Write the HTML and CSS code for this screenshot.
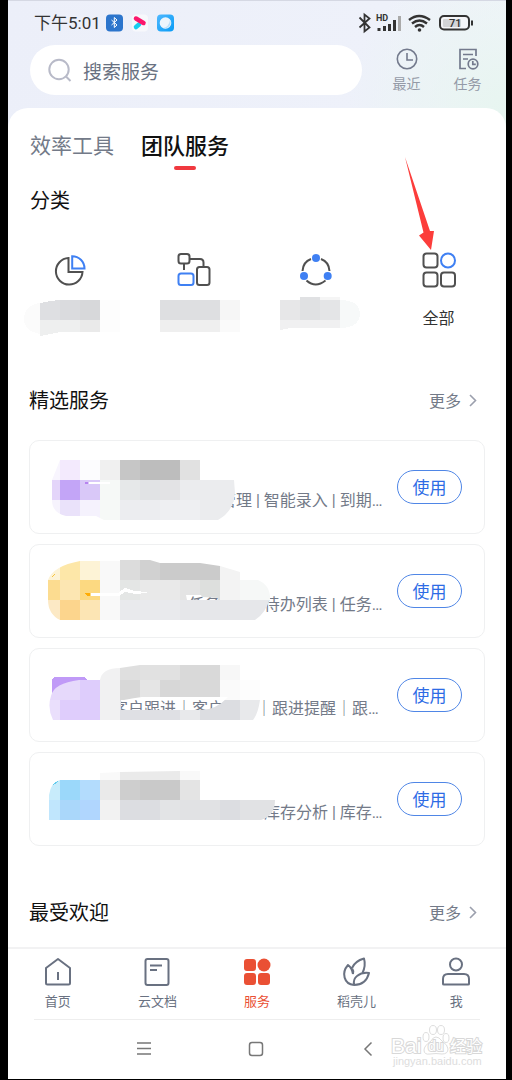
FILE: index.html
```html
<!DOCTYPE html>
<html lang="zh-CN">
<head>
<meta charset="utf-8">
<meta name="viewport" content="width=device-width">
<title>服务</title>
<link rel="stylesheet" href="styles.css">
</head>
<body>
<div class="phone">
  <header class="top">
    <div class="status">
      <span class="time">下午5:01</span>
      <svg class="apps" width="70" height="18" viewBox="0 0 70 18">
        <defs><linearGradient id="wx" x2="1" y2="1"><stop offset="0" stop-color="#4fb8ff"/><stop offset="1" stop-color="#079bf5"/></linearGradient></defs>
        <rect width="17" height="17" y=".5" rx="4" fill="#2c75cc"/>
        <path d="M5.500 6l5.500 5-2.700 2.500v-10L11 6l-5.500 5" fill="none" stroke="#fff"/>
        <rect x="26" width="16" height="17" y=".5" rx="4" fill="#f7f8fc"/>
        <path d="M30 13l3-2.500" stroke="#18cdef" stroke-width="4.500" stroke-linecap="round"/>
        <path d="M30 4.500l7.500 4.500" fill="none" stroke="#fb176c" stroke-width="4.500" stroke-linecap="round"/>
        <rect x="51" width="17" height="17" y=".5" rx="4" fill="url(#wx)"/>
        <circle cx="59.500" cy="9" r="5.800" fill="#edf5fc"/><path d="M64 6a5.800 5.800 0 0 1-7 8q6-1 7-8" fill="#b9def9"/>
      </svg>
      <svg class="signals" width="118" height="22" viewBox="356 13 118 22">
        <path d="M359.500 18.500l10 10-5 4v-17l5 4-10 9" fill="none" stroke="#333" stroke-width="1.800"/>
        <text x="376" y="22" class="hd">HD</text>
        <path d="M377.500 29v3h3v-3zM383 27v5h3v-5zM388 25v7h3v-7zM393 21v11h3v-11z" fill="#333"/><path d="M398 17v15h3v-15z" fill="#aaa"/>
        <g fill="none" stroke="#333" stroke-width="2.400"><path d="M409 21q10-8 21 0M412 24.500q7.500-6 15 0M415 28q4.500-4 9 0"/></g><circle cx="419.500" cy="31" r="1.800" fill="#333"/>
        <rect x="440" y="17" width="29" height="13.500" rx="4" fill="#f4f5f8" stroke="#333" stroke-width="2"/><rect x="443" y="20" width="18" height="8" rx="1" fill="#d4d5d8"/>
        <path d="M472 21.500v5" stroke="#333" stroke-width="2"/><text x="449" y="28" class="pct">71</text>
      </svg>
    </div>
    <div class="search-row">
      <label class="search">
        <svg width="26" height="26" viewBox="0 0 26 26" fill="none" stroke="#b8bac8" stroke-width="2"><circle cx="12" cy="12.500" r="9.700"/><path d="M19 19.500l4.500 4.500"/></svg>
        <input type="text" placeholder="搜索服务" aria-label="搜索服务">
      </label>
      <button class="tool">
        <svg width="24" height="24" viewBox="0 0 24 24" fill="none" stroke="#737a8d" stroke-width="1.600"><circle cx="12" cy="12" r="9.700"/><path d="M12 6v7h6"/></svg>
        <span>最近</span>
      </button>
      <button class="tool">
        <svg width="24" height="24" viewBox="0 0 24 24" fill="none" stroke="#737a8d" stroke-width="1.700"><path d="M20 9V2.500H4v19h6M7 7.500h10M7 12h5"/><circle cx="17" cy="17" r="4.800"/><path d="M16.800 14v3.400h3"/></svg>
        <span>任务</span>
      </button>
    </div>
  </header>
  <main class="sheet">
    <nav class="tabs">
      <button class="tab">效率工具</button>
      <button class="tab active">团队服务</button>
    </nav>
    <section class="categories">
      <h2>分类</h2>
      <div class="cats">
        <button class="cat" aria-label="分类">
          <svg width="36" height="36" viewBox="52 252 36 36" fill="none" stroke="#505050" stroke-width="2"><path d="M68.500 258a13.300 13.300 0 1 0 14 14h-14z"/><path d="M72.200 256.200v12.300h12.300a12.300 12.300 0 0 0-12.300-12.300z" stroke="#3f80f3"/></svg>
          <svg class="mask" width="96" height="38" viewBox="22 298 96 38" overflow="visible" shape-rendering="crispEdges">
            <path fill="#fbfbfb" d="M40 303q-16 2-16 16 0 12 16 15z"/><path fill="#dedfe2" d="M40 303l10-2 10-1v20H40z"/><path fill="#dadbde" d="M60 300h20v20H60z"/><path fill="#d7d8da" d="M80 300h20v20H80z"/><path fill="#eeefef" d="M40 320h40v12H60l-20 4z"/><path fill="#eaeaea" d="M80 320h20v12H80z"/><path fill="#fdfdfd" d="M100 300h20v32h-20z"/>
          </svg>
        </button>
        <button class="cat" aria-label="分类">
          <svg width="36" height="36" viewBox="175 252 36 36" fill="none" stroke="#505050" stroke-width="2"><rect x="178.500" y="254" width="11" height="9.500" rx="2.500"/><path d="M184 264v6M190 259h10q3.500 0 3.500 3.500v4.500"/><rect x="197" y="267" width="12.500" height="18" rx="2.500"/><rect x="178.500" y="273.500" width="15" height="11.500" rx="2.500" stroke="#3f80f3"/></svg>
          <svg class="mask" width="80" height="38" viewBox="153 298 80 38" overflow="visible" shape-rendering="crispEdges">
            <path fill="#dedfe1" d="M160 300h60v20h-60z"/><path fill="#f6f6f6" d="M220 300h20v20h-20z"/><path fill="#efefef" d="M160 320h60v12h-60z"/><path fill="#fafafa" d="M220 320h20v12h-20z"/>
          </svg>
        </button>
        <button class="cat" aria-label="分类">
          <svg width="36" height="36" viewBox="298 252 36 36" fill="none" stroke="#505050" stroke-width="2"><path d="M311 259q-8 3-8.500 12M321 259q8 3 8.500 12M306.500 280.500q9 8 19 0"/><g fill="#3f80f3" stroke="none"><circle cx="316" cy="258" r="4"/><circle cx="304" cy="276" r="4"/><circle cx="327.700" cy="276" r="4"/></g></svg>
          <svg class="mask" width="80" height="38" viewBox="276 298 80 38" overflow="visible" shape-rendering="crispEdges">
            <path fill="#e7e7e8" d="M280 300h20v20h-20z"/><path fill="#e0e1e3" d="M300 297h20v23h-20z"/><path fill="#e4e5e7" d="M320 300h20v20h-20z"/><path fill="#f5f5f5" d="M320 297h20v3h-20z"/><path fill="#f0f0f1" d="M280 320h60v8h-50l-10 2z"/><path fill="#f7f9f9" d="M340 300q20 0 20 15-2 13-20 13z"/>
          </svg>
        </button>
        <button class="cat">
          <svg width="36" height="36" viewBox="421 252 36 36" fill="none" stroke="#505050" stroke-width="2"><rect x="423.500" y="253.500" width="14" height="14" rx="3"/><circle cx="448" cy="260.500" r="7" stroke="#3f80f3"/><rect x="423.500" y="272.500" width="14" height="14" rx="3"/><rect x="441" y="272.500" width="14" height="14" rx="3"/></svg>
          <span>全部</span>
        </button>
      </div>
    </section>
    <svg class="arrow" width="30" height="93" viewBox="405 157 30 93"><path fill="#fc3d3b" d="M405 157l18.500 75.500-4.500 3 12 14.500 3-19h-4z"/></svg>
    <section class="featured">
      <div class="head"><h2>精选服务</h2><a class="more" href="#featured">更多<svg width="10" height="14" viewBox="0 0 10 14"><path d="M2 2l5.500 5.500-5.500 5.500" fill="none" stroke="#9b9fad" stroke-width="1.600"/></svg></a></div>
      <article class="card">
        <p class="desc short">管理 | 智能录入 | 到期…</p>
        <svg class="mosaic" width="455" height="93" viewBox="30 441 455 93" shape-rendering="crispEdges">
          <clipPath id="c1"><path d="M60 460H200v20h34l1 13q-1 18-17 27H104l-8-4H66q-14-3-14-16v-20z"/></clipPath>
          <g clip-path="url(#c1)">
            <path fill="#f8f5fe" d="M40 460h20v20H40z"/><path fill="#f3eafd" d="M60 460h20v20H60z"/><path fill="#fcfcfe" d="M80 460h20v20H80z"/><path fill="#f0f0f0" d="M100 460h20v20h-20z"/><path fill="#c6c6c6" d="M120 460h20v20h-20z"/><path fill="#bdbdbd" d="M140 460h40v20h-40z"/><path fill="#e1e1e1" d="M180 460h20v20h-20z"/>
            <path fill="#e4d5fa" d="M40 480h20v20H40z"/><path fill="#c3a5f7" d="M60 480h20v20H60z"/><path fill="#d9c8f8" d="M80 480h20v20H80z"/><path fill="#f6f9f7" d="M100 480h20v40h-20z"/><path fill="#e6e8e9" d="M120 480h20v20h-20z"/><path fill="#e1e3e5" d="M140 480h20v20h-20z"/><path fill="#e3e3e5" d="M160 480h20v20h-20z"/><path fill="#ebecee" d="M180 480h60v40h-60z"/>
            <path fill="#f6f3fd" d="M40 500h20v20H40z"/><path fill="#eae2fa" d="M60 500h20v20H60z"/><path fill="#f5f2fd" d="M80 500h20v20H80z"/><path fill="#ecedf0" d="M120 500h40v20h-40z"/><path fill="#eeeff2" d="M160 500h40v20h-40z"/>
          </g>
          <path fill="#fff" d="M89 482h21v2H89z"/><path fill="#b783ef" d="M85 482h3v2h-3z"/>
        </svg>
        <button class="use">使用</button>
      </article>
      <article class="card">
        <p class="desc mid">任务　　 | 待办列表 | 任务…</p>
        <svg class="mosaic" width="455" height="93" viewBox="30 545 455 93" shape-rendering="crispEdges">
          <clipPath id="c2"><path clip-rule="evenodd" d="M80 561h40v-1h30l10 3h40l20 3 20 6v8h18q12 5 12 18-4 15-15 22H60q-12-6-12-20v-20q5-14 32-19zM186 595h15l1 2 16 1v2h-31z"/></clipPath>
          <g clip-path="url(#c2)">
            <path fill="#fdf3d6" d="M40 560h20v20H40zM80 560h20v20H80z"/><path fill="#fde7a8" d="M60 560h20v20H60z"/><path fill="#f9f9f9" d="M100 560h20v60h-20z"/><path fill="#dcdcdc" d="M120 560h20v20h-20z"/><path fill="#d1d1d1" d="M140 560h20v20h-20z"/><path fill="#cbcbcb" d="M160 560h60v20h-60z"/><path fill="#f3f3f3" d="M220 560h20v40h-20z"/>
            <path fill="#fcdc90" d="M40 580h20v20H40z"/><path fill="#fce6b2" d="M60 580h20v20H60z"/><path fill="#fcd981" d="M80 580h20v20H80z"/><path fill="#e4e6e5" d="M120 580h20v20h-20z"/><path fill="#e9e9e9" d="M140 580h40v20h-40z"/><path fill="#e4e4e4" d="M180 580h20v20h-20z"/><path fill="#dddfdd" d="M200 580h20v20h-20z"/><path fill="#f6f8f7" d="M240 580h30v20h-30z"/>
            <path fill="#fce9c5" d="M40 600h20v20H40z"/><path fill="#fcd58d" d="M60 600h20v20H60z"/><path fill="#fce5b4" d="M80 600h20v20H80z"/><path fill="#e9eaed" d="M120 600h60v20h-60z"/><path fill="#e6e7ea" d="M180 600h90v20h-90z"/>
          </g>
          <path fill="#fff" d="M91 593h27l7-5 10 3 12 1v1l-12 1-10-2-6 4H91z"/><path fill="#ffad05" d="M84 593h6v3h-3z"/><path d="M52 577l3-3" stroke="#f7c440"/>
        </svg>
        <button class="use">使用</button>
      </article>
      <article class="card">
        <p class="desc">客户跟进｜客户　　｜跟进提醒｜跟…</p>
        <svg class="mosaic" width="455" height="93" viewBox="30 649 455 93" shape-rendering="crispEdges">
          <path fill="#c09af7" d="M52 694v-13q0-4 4-4h28l4 3v6z"/>
          <clipPath id="c3"><path d="M100 680q2-12 20-12l20-3h100v15h20v20q-2 14-7 20H53q-6-12-2-24 3-13 28-16h21zM121 700v10h80q15 0 27-13H142q-8 1-18 3z" clip-rule="evenodd"/></clipPath>
          <g clip-path="url(#c3)">
            <path fill="#e6d9fb" d="M40 680h40v20H40z"/><path fill="#decdfc" d="M80 680h20v40H80z"/><path fill="#f1f1f2" d="M100 660h20v60h-20z"/><path fill="#dfdfdf" d="M120 660h20v20h-20z"/><path fill="#e1e1e1" d="M140 660h40v20h-40z"/><path fill="#d9d9d9" d="M180 660h40v40h-40z"/><path fill="#f7f7f7" d="M220 660h20v20h-20z"/><path fill="#fafafa" d="M220 680h20v20h-20z"/><path fill="#fdfdfd" d="M240 680h20v20h-20z"/>
            <path fill="#d8d8d8" d="M120 680h20v20h-20z"/><path fill="#e5e5e5" d="M140 680h20v20h-20z"/><path fill="#d7d7d7" d="M160 680h20v20h-20z"/><path fill="#eadffc" d="M40 700h20v20H40z"/><path fill="#dfcdfc" d="M60 700h20v20H60z"/><path fill="#dfe0e4" d="M120 700h60v20h-60z"/><path fill="#e8e9eb" d="M180 700h20v20h-20zM240 700h20v20h-20z"/><path fill="#dcdde1" d="M200 700h40v20h-40z"/>
          </g>
        </svg>
        <button class="use">使用</button>
      </article>
      <article class="card">
        <p class="desc last">库存分析 | 库存…</p>
        <svg class="mosaic" width="455" height="93" viewBox="30 753 455 93" shape-rendering="crispEdges">
          <clipPath id="c4"><path d="M60 780h40v-7l20-1 60-1h20v29h75q0 16-14 20H49v-25q2-13 11-15z"/></clipPath>
          <g clip-path="url(#c4)">
            <path fill="#c8ecfb" d="M40 780h20v20H40z"/><path fill="#9bd8fa" d="M60 780h20v20H60z"/><path fill="#b3dcfd" d="M80 780h20v20H80z"/><path fill="#f9f9f9" d="M100 760h20v20h-20zM180 760h20v20h-20z"/><path fill="#eaeaea" d="M120 760h60v20h-60zM100 780h20v20h-20z"/><path fill="#cecece" d="M120 780h20v20h-20z"/><path fill="#c9c9c9" d="M140 780h40v20h-40z"/><path fill="#e4e4e4" d="M180 780h20v20h-20z"/>
            <path fill="#c0e6fd" d="M40 800h20v20H40z"/><path fill="#aad7fa" d="M60 800h20v20H60z"/><path fill="#b0d6fe" d="M80 800h20v20H80z"/><path fill="#f2f2f2" d="M100 800h20v20h-20z"/><path fill="#dcdde1" d="M120 800h40v20h-40zM220 800h20v20h-20z"/><path fill="#e3e4e6" d="M160 800h20v20h-20z"/><path fill="#e1e2e4" d="M180 800h40v20h-40zM240 800h40v20h-40z"/>
          </g>
          <path d="M53 785l5-4" stroke="#65cced"/>
        </svg>
        <button class="use">使用</button>
      </article>
    </section>
    <section class="popular">
      <div class="head"><h2>最受欢迎</h2><a class="more" href="#popular">更多<svg width="10" height="14" viewBox="0 0 10 14"><path d="M2 2l5.500 5.500-5.500 5.500" fill="none" stroke="#9b9fad" stroke-width="1.600"/></svg></a></div>
    </section>
  </main>
  <nav class="bottom">
    <a href="#home"><svg width="32" height="32" viewBox="0 0 32 32" fill="none" stroke="#697181" stroke-width="2"><path d="M16 3L4 12v15q0 1.500 1.500 1.500h21q1.500 0 1.500-1.500V12zM16 16v8" stroke-linejoin="round"/></svg>首页</a>
    <a href="#docs"><svg width="32" height="32" viewBox="0 0 32 32" fill="none" stroke="#697181" stroke-width="2"><rect x="4.500" y="3" width="23" height="26" rx="2"/><path d="M9 9.500h12M9 14h7"/></svg>云文档</a>
    <a class="on" href="#services"><svg width="32" height="32" viewBox="0 0 32 32" fill="#ea5034"><rect x="3" y="3" width="12" height="12" rx="3"/><circle cx="23" cy="9" r="6.500"/><rect x="3" y="17" width="12" height="12" rx="3"/><rect x="17" y="17" width="12" height="12" rx="3"/></svg>服务</a>
    <a href="#templates"><svg width="32" height="32" viewBox="0 0 32 32" fill="none" stroke="#697181" stroke-width="2" stroke-linejoin="round"><path d="M11 12q3-7 12-9.500 2 7-1.500 14.500M13 29C3 28 0 17 7 9q4 3 5 9M13 29q-1-6 3-9 5-4 12-3-3 12-15 12M12 18q1-3-1-6"/></svg>稻壳儿</a>
    <a href="#me"><svg width="32" height="32" viewBox="0 0 32 32" fill="none" stroke="#697181" stroke-width="2"><circle cx="16" cy="8.500" r="6"/><path d="M3 28v-5q0-5 5-5h16q5 0 5 5v5q0 .5-1 .5H4q-1 0-1-.5z"/></svg>我</a>
  </nav>
  <div class="system">
    <button aria-label="菜单"><svg width="16" height="16" viewBox="0 0 16 16"><path d="M1 2h14M1 7.500h14M1 13h14" stroke="#777" stroke-width="1.500"/></svg></button>
    <button aria-label="主页"><svg width="16" height="16" viewBox="0 0 16 16"><rect x="1.500" y="1.500" width="13" height="13" rx="2.500" fill="none" stroke="#777" stroke-width="1.500"/></svg></button>
    <button aria-label="返回"><svg width="16" height="16" viewBox="0 0 16 16"><path d="M11.500 1.500L5 8l6.500 6.500" fill="none" stroke="#777" stroke-width="1.500"/></svg></button>
    <svg class="mark" width="94" height="46" viewBox="390 1023 94 46">
      <g fill="#fff" stroke="#dedede"><ellipse cx="426" cy="1037" rx="3" ry="4.500"/><ellipse cx="433" cy="1030" rx="3.500" ry="4.500"/><ellipse cx="441" cy="1030" rx="3.500" ry="4.500"/><ellipse cx="446" cy="1038" rx="3" ry="4.500"/><path d="M436 1037q-3 0-5 4-7 5-7 9 0 5 6 4 6-1 12 0 6 0 6-5 0-4-6-8-3-4-6-4z"/></g>
      <text class="logo" x="391" y="1053">Bai</text><text class="logo du" x="428" y="1051">du</text><text class="logo cn" x="450" y="1052">经验</text><text class="url" x="393" y="1065">jingyan.baidu.com</text>
    </svg>
  </div>
</div>
</body>
</html>
```
FILE: styles.css
```css
* { box-sizing: border-box; }
body {
  margin: 0;
  background: #000;
  font-family: "Noto Sans CJK SC", sans-serif;
  color: #111;
}
button { border: 0; padding: 0; background: none; font: inherit; color: inherit; }
a { text-decoration: none; color: inherit; }
svg { display: block; flex: none; }
h2 { margin: 0; font-size: 20px; font-weight: 400; line-height: 28px; }
.phone {
  display: flex;
  flex-direction: column;
  min-height: calc(100vh - 1px);
  margin: 0 6px 1px 8px;
  background:
    radial-gradient(circle at 100% 110px, #e7f5f0, transparent 160px),
    linear-gradient(100deg, #eceff9 0, #eef1fa 55%, #f6f8fb 100%);
}
.top { height: 108px; border-top: 1px solid #d5d8e3; }
.status { display: flex; align-items: center; height: 44px; padding: 0 32px 0 26px; }
.time { font-family: Roboto, "Noto Sans CJK SC", sans-serif; font-size: 17px; line-height: 24px; color: #333; }
.apps { margin-left: 5px; }
.signals { margin-left: auto; }
.hd { font: 700 9px Roboto, sans-serif; fill: #333; }
.pct { font: 500 11px Roboto, sans-serif; fill: #333; }
.search-row { display: flex; align-items: center; padding: 0 8px 0 22px; }
.search {
  display: flex;
  flex: 1;
  align-items: center;
  gap: 10px;
  min-width: 0;
  height: 50px;
  margin-right: 14px;
  padding: 0 17px;
  border-radius: 25px;
  background: #fff;
}
.search input { flex: 1; min-width: 0; border: 0; padding: 0; outline: 0; background: none; font: 19px "Noto Sans CJK SC", sans-serif; }
.search input::placeholder { color: #697181; opacity: 1; }
.tool { display: flex; flex-direction: column; align-items: center; gap: 2px; width: 61px; font-size: 14px; line-height: 20px; color: #949aa7; }
.sheet { position: relative; flex: 1; border-radius: 20px 20px 0 0; background: #fff; }
.tabs { display: flex; align-items: center; gap: 27px; padding: 20px 22px 0; }
.tab { position: relative; height: 32px; font-size: 21px; line-height: 32px; color: #737a88; }
.tab.active { font-size: 22px; font-weight: 500; color: #111; }
.tab.active::after { content: ""; position: absolute; bottom: -10px; left: 50%; width: 22px; height: 4px; margin-left: -11px; border-radius: 2px; background: #f0393f; }
.categories { padding-top: 26px; }
.categories h2 { padding-left: 22px; }
.cats { display: grid; grid-template-columns: repeat(4, 1fr); padding: 38px 6px 0 0; }
.cat { display: flex; flex-direction: column; align-items: center; height: 84px; gap: 10px; font-size: 16px; color: #333; }
.cat span { line-height: 38px; }
.arrow { position: absolute; top: 49px; right: 71px; }
.featured { padding: 50px 21px 0; }
.head { display: flex; align-items: center; justify-content: space-between; }
.more { display: flex; align-items: center; gap: 7px; padding-right: 7px; font-size: 16px; line-height: 28px; color: #737a88; }
.featured .head { margin-bottom: 26px; }
.card { position: relative; display: flex; align-items: center; justify-content: space-between; height: 94px; margin-bottom: 10px; padding: 0 22px 0 82px; border: 1px solid #eff0f1; border-radius: 10px; background: #fff; overflow: hidden; }
.desc { margin: 0; padding-top: 28px; font-family: Roboto, "Noto Sans CJK SC", sans-serif; font-size: 16px; line-height: 24px; white-space: pre; color: #737a88; }
.desc.mid { text-indent: 76px; }
.desc.short { text-indent: 108px; }
.desc.last { text-indent: 152px; }
.mosaic { position: absolute; top: 0; left: 0; }
.use { width: 65px; height: 34px; border: 1px solid #4f86e6; border-radius: 17px; font-size: 17px; line-height: 30px; color: #2d6be5; }
.popular { padding: 42px 21px 20px; }
.bottom { display: grid; grid-template-columns: repeat(5, 1fr); padding: 7px 0 8px; border-top: 2px solid #f2f2f3; background: #fff; font-size: 13px; line-height: 20px; color: #697181; }
.bottom a { display: flex; flex-direction: column; align-items: center; gap: 3px; }
.bottom .on { color: #ea5034; }
.system { position: relative; display: flex; align-items: center; justify-content: center; height: 60px; padding-right: 2px; background: linear-gradient(#eee, #eee) 50% 0 / calc(100% - 52px) 1px no-repeat #fff; }
.system button { width: 112px; display: flex; justify-content: center; }
.mark { position: absolute; right: 22px; top: 4px; }
.logo { font: 400 21px "Liberation Sans", sans-serif; fill: #fff; stroke: #d8d8d8; stroke-width: 2px; paint-order: stroke; }
.logo.du { font-size: 14px; }
.logo.cn { font: 400 16px "Noto Sans CJK SC", sans-serif; }
.url { font: 11px "Liberation Sans", sans-serif; fill: #ddd; }
```
